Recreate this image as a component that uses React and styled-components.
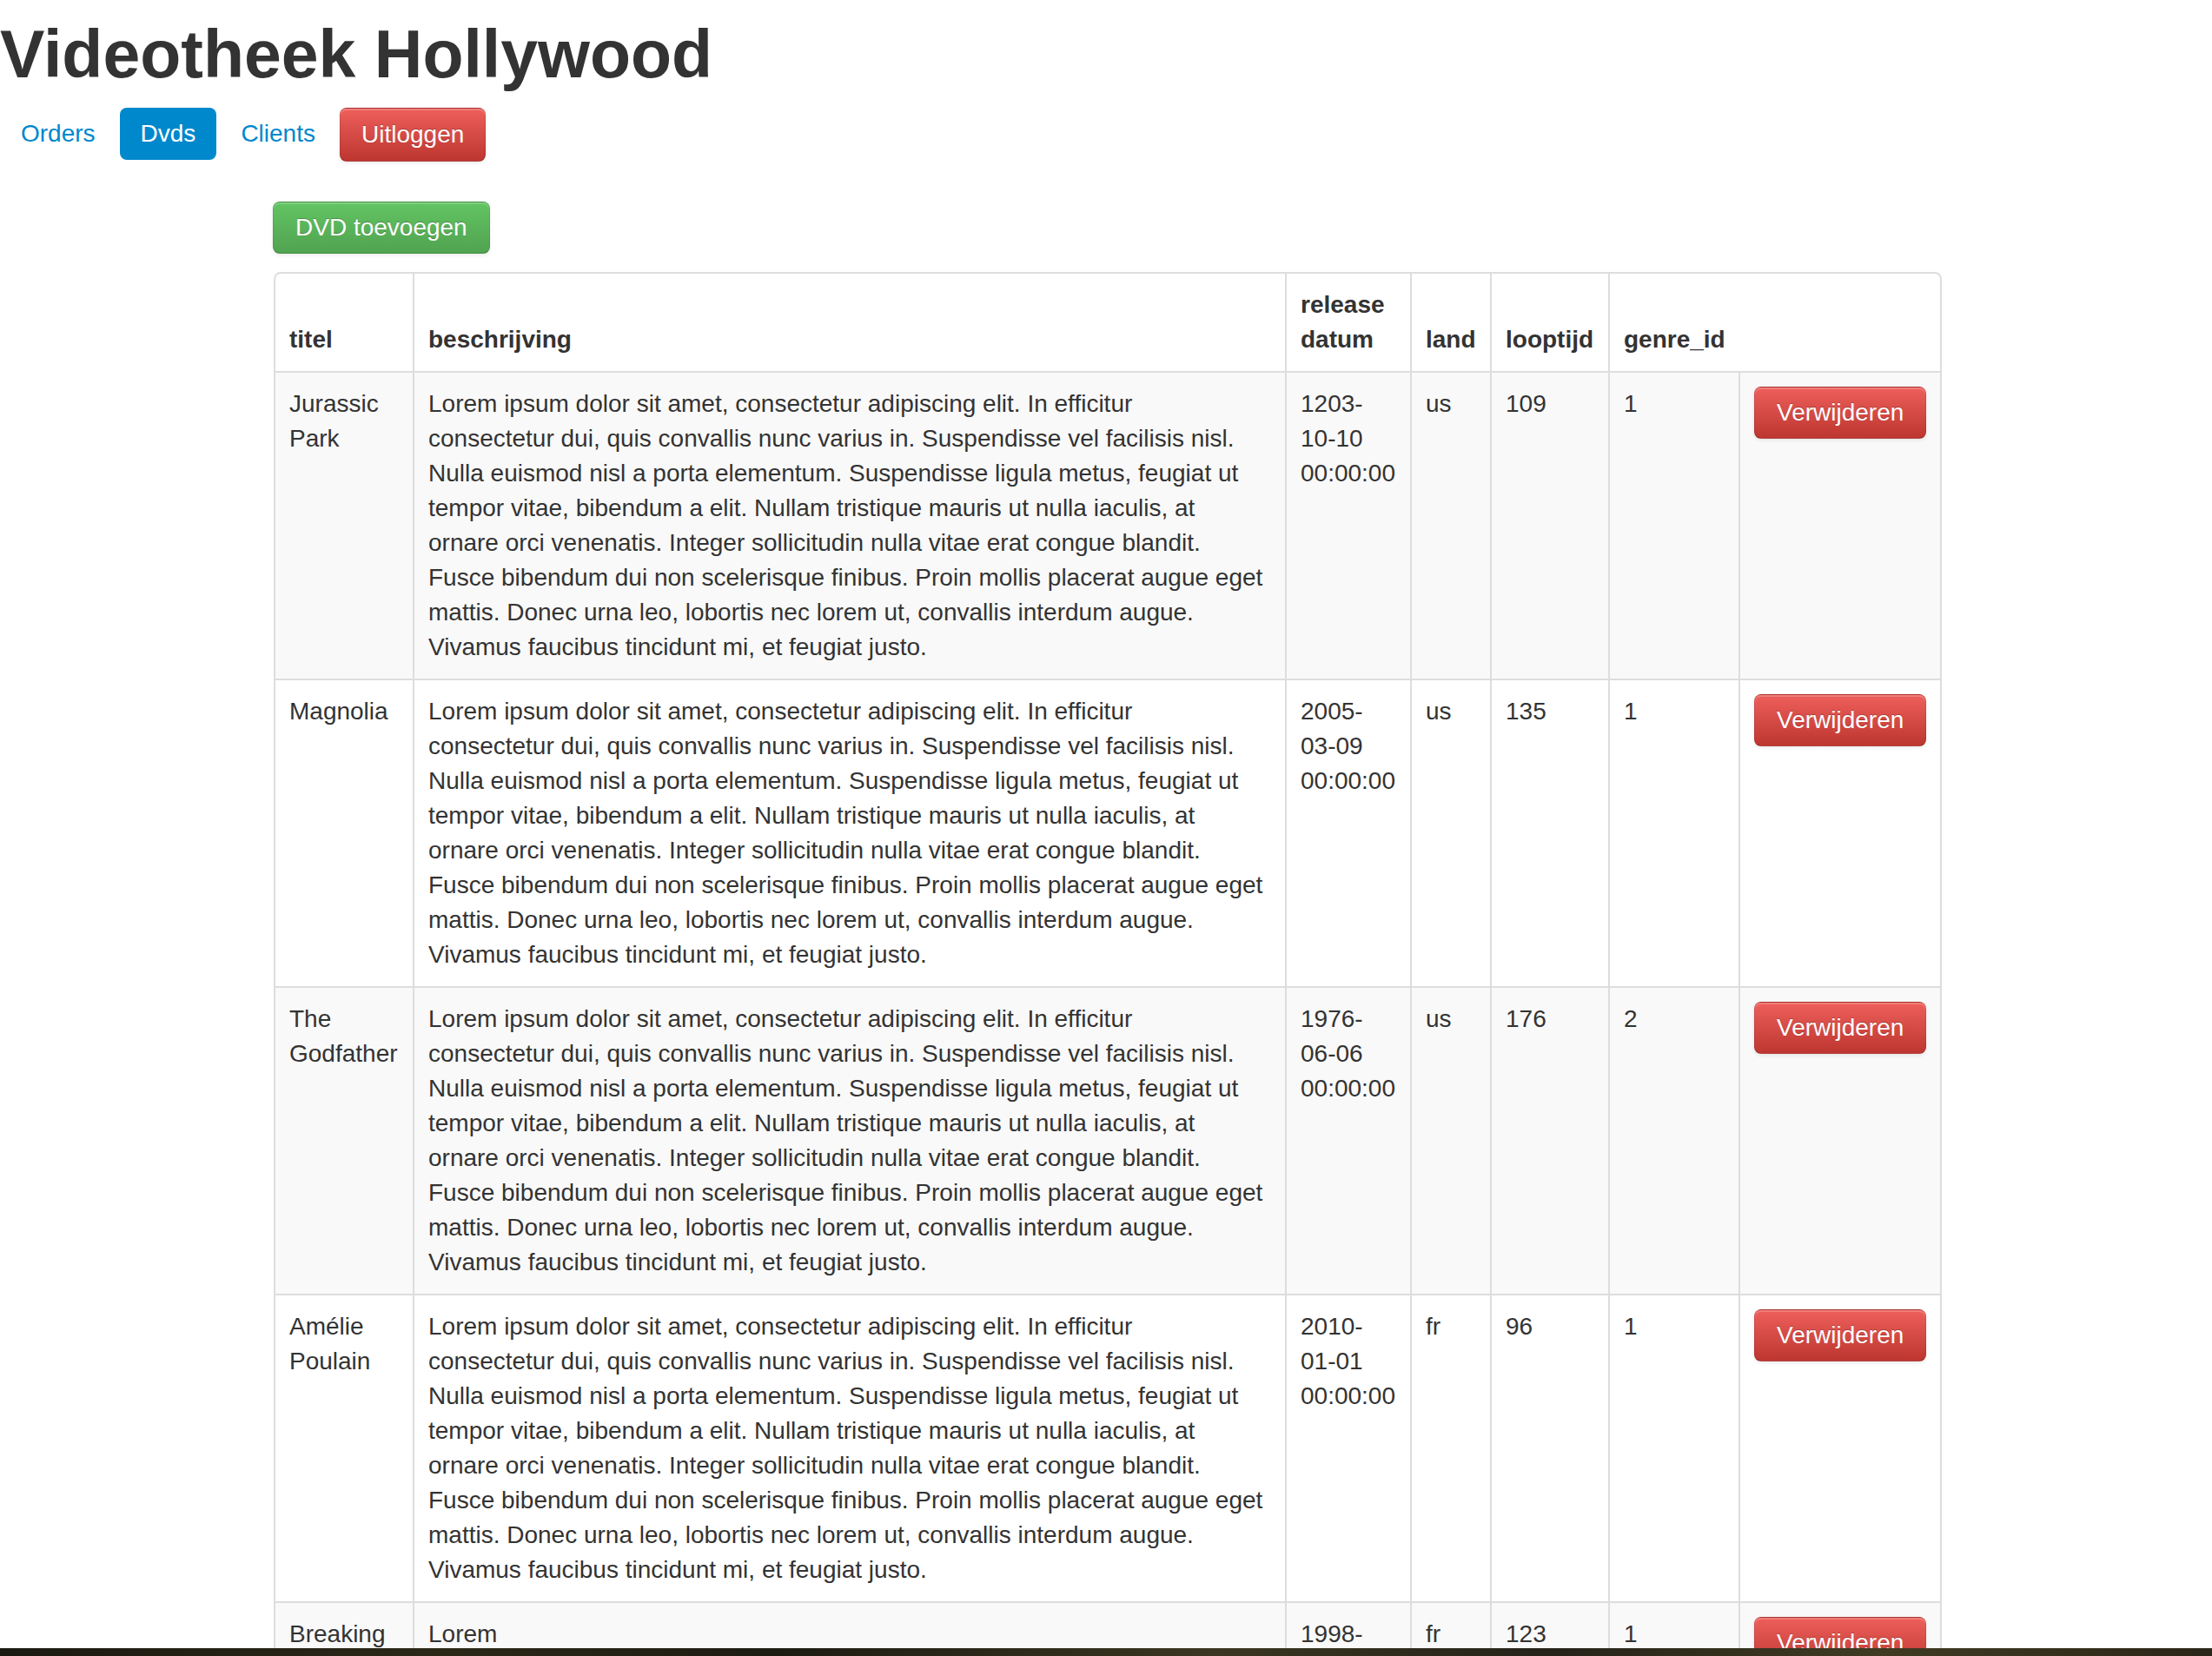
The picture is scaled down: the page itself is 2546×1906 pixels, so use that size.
import React from 'react'
import styled, { createGlobalStyle } from 'styled-components'

const GlobalStyle = createGlobalStyle`
    html, body {
        margin: 0;
        padding: 0;
        background: #ffffff;
    }
    body {
        font-family: "Liberation Sans", Arial, Helvetica, sans-serif;
        font-size: 28px;
        line-height: 40px;
        color: #333333;
    }
`;

const LOREM = "Lorem ipsum dolor sit amet, consectetur adipiscing elit. In efficitur consectetur dui, quis convallis nunc varius in. Suspendisse vel facilisis nisl. Nulla euismod nisl a porta elementum. Suspendisse ligula metus, feugiat ut tempor vitae, bibendum a elit. Nullam tristique mauris ut nulla iaculis, at ornare orci venenatis. Integer sollicitudin nulla vitae erat congue blandit. Fusce bibendum dui non scelerisque finibus. Proin mollis placerat augue eget mattis. Donec urna leo, lobortis nec lorem ut, convallis interdum augue. Vivamus faucibus tincidunt mi, et feugiat justo.";

const dvds = [
    { id: 1, titel: 'Jurassic Park', beschrijving: LOREM, datum: '1203-10-10 00:00:00', land: 'us', looptijd: 109, genre: 1 },
    { id: 2, titel: 'Magnolia', beschrijving: LOREM, datum: '2005-03-09 00:00:00', land: 'us', looptijd: 135, genre: 1 },
    { id: 3, titel: 'The Godfather', beschrijving: LOREM, datum: '1976-06-06 00:00:00', land: 'us', looptijd: 176, genre: 2 },
    { id: 4, titel: 'Amélie Poulain', beschrijving: LOREM, datum: '2010-01-01 00:00:00', land: 'fr', looptijd: 96, genre: 1 },
    { id: 5, titel: 'Breaking Bad', beschrijving: 'Lorem', datum: '1998-01-20 00:00:00', land: 'fr', looptijd: 123, genre: 1 },
];

// column widths (border to border) as measured
const columns = [160, 1004, 144, 92, 136, 150, 232];

// the dates break after the hyphen in the original browser
const breakable = (s) => s.replace(/-/g, '-\u200B');

const App = () => {
    return (
        <Page>
            <GlobalStyle />
            <Content>
                <Title>Videotheek Hollywood</Title>
                <Nav>
                    <li><NavLink href="#">Orders</NavLink></li>
                    <li><NavLink href="#" $active>Dvds</NavLink></li>
                    <li><NavLink href="#">Clients</NavLink></li>
                    <li><Button $variant="danger" $large>Uitloggen</Button></li>
                </Nav>

                <Main>
                    <Toolbar>
                        <Button $variant="success">DVD toevoegen</Button>
                    </Toolbar>
                    <Table>
                        <colgroup>
                            {columns.map((w, i) => <col key={i} style={{ width: w }} />)}
                        </colgroup>
                        <thead>
                            <tr>
                                <th>titel</th>
                                <th>beschrijving</th>
                                <th>release datum</th>
                                <th>land</th>
                                <th>looptijd</th>
                                <th>genre_id</th>
                            </tr>
                        </thead>
                        <tbody>
                            {dvds.map((dvd) => (
                                <tr key={dvd.id}>
                                    <td>{dvd.titel}</td>
                                    <Description>{dvd.beschrijving}</Description>
                                    <td>{breakable(dvd.datum)}</td>
                                    <td>{dvd.land}</td>
                                    <td>{dvd.looptijd}</td>
                                    <td>{dvd.genre}</td>
                                    <td><Button $variant="danger">Verwijderen</Button></td>
                                </tr>
                            ))}
                        </tbody>
                    </Table>
                </Main>
            </Content>
            <DesktopEdge />
        </Page>
    )
}

const Page = styled.div`
    height: 100vh;
    display: flex;
    flex-direction: column;
    overflow: hidden;
`;

const Content = styled.div`
    flex: 1;
    min-height: 0;
    overflow: hidden;
`;

const Title = styled.h1`
    margin: 20px 0 19px;
    font-size: 77px;
    line-height: 1.1;
    font-weight: 700;
    color: #333333;
`;

const Nav = styled.ul`
    list-style: none;
    margin: 0 0 46px;
    padding: 0;
    display: flex;
    align-items: flex-start;
    gap: 4px;
`;

const NavLink = styled.a`
    display: block;
    padding: 10px 24px;
    line-height: 40px;
    border-radius: 8px;
    text-decoration: none;
    color: ${p => p.$active ? '#ffffff' : '#0088cc'};
    background: ${p => p.$active ? '#0088cc' : 'transparent'};
`;

const variants = {
    danger: { top: '#ee5f5b', bottom: '#bd362f' },
    success: { top: '#62c462', bottom: '#51a351' },
};

const Button = styled.button`
    display: inline-block;
    font-family: inherit;
    font-size: 28px;
    line-height: 40px;
    padding: ${p => p.$large ? '10px 24px' : '9px 25px'};
    color: #ffffff;
    text-shadow: 0 -1px 0 rgba(0, 0, 0, 0.25);
    background: linear-gradient(to bottom, ${p => variants[p.$variant].top}, ${p => variants[p.$variant].bottom});
    border: 1px solid rgba(0, 0, 0, 0.1);
    border-bottom-color: rgba(0, 0, 0, 0.25);
    border-radius: 8px;
    box-shadow: inset 0 2px 0 rgba(255, 255, 255, 0.2), 0 2px 4px rgba(0, 0, 0, 0.08);
    cursor: pointer;
`;

const Main = styled.div`
    padding-left: 315px;
`;

const Toolbar = styled.div`
    margin-bottom: 21px;
    margin-left: -1px;
`;

const Table = styled.table`
    width: 1920px;
    table-layout: fixed;
    border-collapse: separate;
    border-spacing: 0;
    border: 2px solid #dddddd;
    border-left: 0;
    border-radius: 8px;

    th, td {
        padding: 16px;
        line-height: 40px;
        text-align: left;
        border-left: 2px solid #dddddd;
        border-top: 2px solid #dddddd;
    }
    th {
        font-weight: 700;
        vertical-align: bottom;
    }
    td {
        vertical-align: top;
    }
    thead tr:first-child th {
        border-top: 0;
    }
    thead tr:first-child th:first-child {
        border-top-left-radius: 8px;
    }
    tbody tr:nth-child(odd) td {
        background: #f9f9f9;
    }
`;

// narrower text box so the lines wrap as in the original font
const Description = styled.td`
    && {
        padding-right: 24.5px;
    }
`;

const DesktopEdge = styled.div`
    flex: 0 0 9px;
    background: linear-gradient(90deg, #1b1a12 0%, #2b2818 20%, #1d1c13 35%, #3a3622 55%, #25231a 70%, #403b22 85%, #2a2619 100%);
`;

export default App
